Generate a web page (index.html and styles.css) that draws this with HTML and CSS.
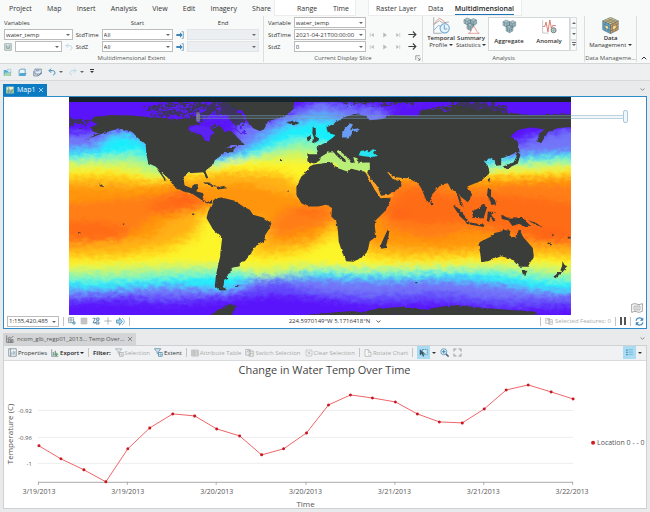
FILE: index.html
```html
<!DOCTYPE html>
<html lang="en">
<head>
<meta charset="utf-8">
<title>Multidimensional map</title>
<link rel="stylesheet" href="styles.css">
</head>
<body>
<svg class="defs" aria-hidden="true">
  <symbol id="folder" viewBox="0 0 24 24"><path d="M2 21V5h7l2 3h10v13z" fill="#55add2"/><path d="M2 21l4-9h17l-4 9z" fill="#a7d6b0"/><path d="M12 3h9v9h-7z" fill="#d9edf7" stroke="#6fa9c6"/></symbol>
  <symbol id="open" viewBox="0 0 24 24"><path d="M3 20V6l5-3h11v17z" fill="#eaf5fa" stroke="#468db6" stroke-width="2"/><path d="M2 21l4-8h17l-4 8z" fill="#54a7d0"/></symbol>
  <symbol id="save" viewBox="0 0 24 24"><path d="M5 3h17v13H5zM2 8v13h12" fill="#e7eef8" stroke="#64758e" stroke-width="2"/><path d="M8 4h9v5H8z" fill="#8ca9c9"/><path d="M12 17l3 4 7-9" fill="none" stroke="#3d67a0" stroke-width="2"/></symbol>
  <symbol id="undo" viewBox="0 0 24 24"><path d="M9 2L3 8l6 6M4 8h10c9 0 9 12 1 13" fill="none" stroke="currentColor" stroke-width="3"/></symbol>
  <symbol id="redo" viewBox="0 0 24 24"><path d="M15 2l6 6-6 6M20 8H10C1 8 1 20 9 21" fill="none" stroke="currentColor" stroke-width="3"/></symbol>
  <symbol id="into" viewBox="0 0 24 24"><path d="M1 9h11V4l8 8-8 8v-5H1z" fill="#3e83b7"/><path d="M17 2h5v20h-5" fill="none" stroke="#4c7da2" stroke-width="2"/></symbol>
  <symbol id="first" viewBox="0 0 24 24"><path d="M5 4v16" stroke="#aaa" stroke-width="2"/><path d="M19 4v16L8 12z" fill="#bbb"/></symbol>
  <symbol id="play" viewBox="0 0 24 24"><path d="M5 2v20l15-10z" fill="#b6bbb8"/></symbol>
  <symbol id="last" viewBox="0 0 24 24"><path d="M19 4v16" stroke="#aaa" stroke-width="2"/><path d="M5 4v16l11-8z" fill="#bbb"/></symbol>
  <symbol id="arrow" viewBox="0 0 24 24"><path d="M1 12h20M13 4l8 8-8 8" fill="none" stroke="#404040" stroke-width="3"/></symbol>
  <symbol id="chev" viewBox="0 0 24 24"><path d="M3 7l9 9 9-9" fill="none" stroke="currentColor" stroke-width="4"/></symbol>
  <symbol id="profile" viewBox="0 0 48 48"><path d="M2 1v45h22M2 22l16-12 9 7 18-3" fill="none" stroke="#8a9298" stroke-width="2"/><path d="M3 19L18 3l10 7 16 15" fill="none" stroke="#d9705f" stroke-width="2"/><path d="M3 37l12-13 8 3" fill="none" stroke="#5a9bc0" stroke-width="2"/><circle cx="33" cy="32" r="13" fill="#e4f3fc" stroke="#6ba7d2" stroke-width="3"/><path d="M32 23v11h8" fill="none" stroke="#4080af" stroke-width="2"/></symbol>
  <symbol id="cubes" viewBox="0 0 48 48"><g stroke="#56717d" stroke-width="1.5" fill="#a8c4cb"><path d="M3 9l10-6 11 5v11l-10 6-11-5zM24 10l10-5 10 5v12l-10 5-10-5zM13 24l11-5 11 5v14l-11 6-11-6z"/><path d="M3 9l11 5 10-6M14 14v11M24 10l10 5 10-5M34 15v12M13 24l11 6 11-6M24 30v14M8 11v12M19 11v11M29 12v13M39 12v12M18 27v14M30 27v13M13 31l11 6 11-6" fill="none"/></g></symbol>
  <symbol id="summary" viewBox="0 0 48 48"><use href="#cubes" width="42" height="42"/><path d="M15 46c10 0 8-18 15-18s7 18 16 18z" fill="#fff" stroke="#d48478" stroke-width="2"/></symbol>
  <symbol id="anomaly" viewBox="0 0 48 48"><path d="M2 4v41h20" fill="none" stroke="#a6aaad" stroke-width="2"/><path d="M3 24h6l4-14 6 31 6-38 5 27 4-9h10" fill="none" stroke="#cf5e52" stroke-width="2.5"/><circle cx="37" cy="36" r="8" fill="#c6d4ce" stroke="#677c78" stroke-width="3"/><path d="M31 36h12M37 29v14" stroke="#677c78"/></symbol>
  <symbol id="data" viewBox="0 0 48 48"><g stroke="#476675" stroke-width="1.5"><path d="M2 11l22-10 22 10-22 11z" fill="#e3c47d"/><path d="M2 11l22 11v25L2 36z" fill="#6aabc9"/><path d="M46 11L24 22v25l22-11z" fill="#d69b55"/><path d="M9 8l22 10v25M17 5l22 10v25M39 8L17 18v25M31 5L9 15v25M2 19l22 11 22-11M2 28l22 11 22-11" fill="none"/></g><path d="M10 24l7 3v7l-7-3zM31 27l8-4v8l-8 4z" fill="#f6da8c"/></symbol>
  <symbol id="launch" viewBox="0 0 24 24"><path d="M3 20V3h17M10 10l10 10M20 11v10H10" fill="none" stroke="#666" stroke-width="2.5"/></symbol>
  <symbol id="mapicon" viewBox="0 0 24 24"><path d="M1 2h22v20H1z" fill="#e6edca"/><path d="M1 13l8-4 5 4 9-5v14H1z" fill="#93bb98"/><path d="M5 2l4 8-2 12M14 22l2-9 7-4" fill="none" stroke="#648caa" stroke-width="2"/></symbol>
  <symbol id="close" viewBox="0 0 24 24"><path d="M4 4l16 16M20 4L4 20" stroke="currentColor" stroke-width="2.5"/></symbol>
  <symbol id="grid" viewBox="0 0 24 24"><path d="M2 2h15v15H2zM9 2v15M2 9h15" fill="none" stroke="#6c8090" stroke-width="2"/><path d="M18 12v12M12 18h12" stroke="#3d8bbd" stroke-width="2.5"/></symbol>
  <symbol id="cubeset" viewBox="0 0 24 24"><path d="M2 2h20v20H2z" fill="#d8e3df" stroke="#8b9c98" stroke-width="2"/><path d="M7 6v10h10V6M12 9v7" fill="none" stroke="#6f9096" stroke-width="2"/></symbol>
  <symbol id="tiles" viewBox="0 0 24 24"><path d="M3 3h18v18H3z" fill="#d6d6d6"/><path d="M3 3h18v18H3zM9 3v18M15 3v18M3 9h18M3 15h18" fill="none" stroke="#aaa" stroke-width="1.5"/></symbol>
  <symbol id="snap" viewBox="0 0 24 24"><path d="M2 4h8L3 17h9M14 3h7v7h-7zM12 15h9v6h-9z" fill="none" stroke="#507a99" stroke-width="2.5"/><path d="M5 21L20 7" stroke="#55a4d0" stroke-width="2"/></symbol>
  <symbol id="cross" viewBox="0 0 24 24"><path d="M12 1v22M1 12h22" stroke="#8b969b" stroke-width="2"/></symbol>
  <symbol id="north" viewBox="0 0 24 24"><path d="M1 8h8V2l8 10-8 10v-6H1z" fill="#a5d0e8" stroke="#4b8bb2" stroke-width="2"/><path d="M16 3c8 4 8 14 0 18" fill="none" stroke="#5c99c0" stroke-width="2"/></symbol>
  <symbol id="chart" viewBox="0 0 24 24"><path d="M2 1v21h20M5 13l5-7 5 4 7-7M8 22v-9h5v9M16 22v-8h5v8" fill="none" stroke="currentColor" stroke-width="2"/></symbol>
  <symbol id="props" viewBox="0 0 24 24"><path d="M2 2h20v20H2zM7 2v20" fill="#f7fafb" stroke="#72818c" stroke-width="2"/><path d="M10 18v-6M14 18V7M18 18v-9" stroke="#6d91a9" stroke-width="2"/></symbol>
  <symbol id="export" viewBox="0 0 24 24"><path d="M2 1v21h20" fill="none" stroke="#6b7a80" stroke-width="2"/><path d="M5 20V9h4v11zM11 20V5h4v15z" fill="#8b9ca2"/><path d="M14 10l6 6-6 6M10 16h10" fill="none" stroke="#4a9e60" stroke-width="3"/></symbol>
  <symbol id="filter" viewBox="0 0 24 24"><path d="M1 2h17l-6 8v7l-4-3v-4z" fill="#dbe9ef" stroke="currentColor" stroke-width="2"/><path d="M12 12h10v10H12z" fill="#e9f6fc" stroke="currentColor" stroke-width="2"/><path d="M12 17h10M17 12v10" stroke="currentColor"/></symbol>
  <symbol id="table" viewBox="0 0 24 24"><path d="M2 3h20v18H2z" fill="#ddd"/><path d="M2 3h20v18H2zM2 9h20M2 15h20M9 3v18" fill="none" stroke="#b1b1b1" stroke-width="2"/></symbol>
  <symbol id="switch" viewBox="0 0 24 24"><path d="M2 4h12v15H2zM11 8h11v14H11zM5 12l4-6 5 5M14 18l4-5 3 4" fill="none" stroke="#aaa" stroke-width="2"/></symbol>
  <symbol id="clear" viewBox="0 0 24 24"><path d="M3 3h18v18H3z" fill="none" stroke="#aaa" stroke-width="2" stroke-dasharray="5 2"/><path d="M8 7l8 9M16 7l-8 9" stroke="#aaa" stroke-width="2"/></symbol>
  <symbol id="rotate" viewBox="0 0 24 24"><path d="M3 2v20h18V11L13 2zM13 2v9h8" fill="#fafafa" stroke="#aaa" stroke-width="2"/><path d="M11 15l6 5" stroke="#a0bdcb" stroke-width="2"/></symbol>
  <symbol id="select" viewBox="0 0 24 24"><path d="M9 4h13v13H9z" fill="#c9e9f6" stroke="#397b9f" stroke-width="2" stroke-dasharray="4 2"/><path d="M2 3v17l5-4 4 7 3-2-3-6h6z" fill="#3b596c"/></symbol>
  <symbol id="magnify" viewBox="0 0 24 24"><path d="M15 15l8 8" stroke="#48667f" stroke-width="4"/><circle cx="10" cy="10" r="8" fill="#e7f5fc" stroke="#5489ad" stroke-width="2"/><path d="M5 10h10M10 5v10" stroke="#337eb0" stroke-width="2.5"/></symbol>
  <symbol id="extent" viewBox="0 0 24 24"><path d="M2 9V2h7zM15 2h7v7zM2 15v7h7zM22 15v7h-7z" fill="#b5b5b5" stroke="#b5b5b5" stroke-width="2"/></symbol>
  <symbol id="legend" viewBox="0 0 24 24"><path d="M3 4h4v3H3zM3 10h4v3H3zM3 16h4v3H3z" fill="#3b88b5"/><path d="M9 5h12M9 11h12M9 17h12" stroke="#68aed1" stroke-width="2"/></symbol>
  <symbol id="refresh" viewBox="0 0 24 24"><path d="M3 10C4 1 16 0 20 7M21 14c-1 9-13 10-17 3" fill="none" stroke="#3d88c4" stroke-width="3"/><path d="M22 1v9h-9zM2 23v-9h9z" fill="#3d88c4"/></symbol>
  <symbol id="book" viewBox="0 0 36 30"><path d="M2 4l10-2 12 3 10-3v23l-10 3-12-3-10 3z" fill="#fff" stroke="#777" stroke-width="2"/><path d="M9 9h18v12H9zM15 11v8M21 11v8" fill="none" stroke="#888" stroke-width="2"/></symbol>
</svg>

<header class="ribbon">
  <nav class="tabs">
    <div class="tabset plain"><a href="#">Project</a><a href="#">Map</a><a href="#">Insert</a><a href="#">Analysis</a><a href="#">View</a><a href="#">Edit</a><a href="#">Imagery</a><a href="#">Share</a></div>
    <div class="tabset context range"><a href="#">Range</a><a href="#">Time</a></div>
    <div class="tabset context layer"><a href="#">Raster Layer</a><a href="#">Data</a><a href="#" class="active">Multidimensional</a></div>
  </nav>
  <div class="groups">
    <section class="group">
      <div class="extent">
        <label for="vars">Variables</label><span></span><span class="mid">Start</span><span></span><span class="mid">End</span>
        <span class="combo"><select id="vars"><option>water_temp</option></select></span>
        <label for="t0">StdTime</label><span class="combo"><select id="t0"><option>All</option></select></span>
        <svg class="ic8"><use href="#into"/></svg><span class="combo off"><select disabled aria-label="End time"><option></option></select></span>
        <span class="picker"><svg class="ic8"><use href="#cubeset"/></svg><span class="combo"><select aria-label="Variable set"><option></option></select></span><button class="pale" aria-label="Reset"><svg class="ic8"><use href="#undo"/></svg></button></span>
        <label for="z0">StdZ</label><span class="combo"><select id="z0"><option>All</option></select></span>
        <svg class="ic8"><use href="#into"/></svg><span class="combo off"><select disabled aria-label="End depth"><option></option></select></span>
      </div>
      <h2>Multidimensional Extent</h2>
    </section>
    <section class="group">
      <div class="slice">
        <label for="v1">Variable</label><span class="combo"><select id="v1"><option>water_temp</option></select></span><span></span>
        <label for="t1">StdTime</label><span class="combo"><select id="t1"><option>2021-04-21T00:00:00</option></select></span>
        <span class="steps"><button aria-label="First"><svg class="ic6"><use href="#first"/></svg></button><button aria-label="Play"><svg class="ic6"><use href="#play"/></svg></button><button aria-label="Last"><svg class="ic6"><use href="#last"/></svg></button><button aria-label="Next"><svg class="ic9"><use href="#arrow"/></svg></button></span>
        <label for="z1">StdZ</label><span class="combo"><select id="z1"><option>0</option></select></span>
        <span class="steps"><button aria-label="First"><svg class="ic6"><use href="#first"/></svg></button><button aria-label="Play"><svg class="ic6"><use href="#play"/></svg></button><button aria-label="Last"><svg class="ic6"><use href="#last"/></svg></button><button aria-label="Next"><svg class="ic9"><use href="#arrow"/></svg></button></span>
      </div>
      <h2>Current Display Slice<svg class="ic6 launcher"><use href="#launch"/></svg></h2>
    </section>
    <section class="group">
      <div class="tools">
        <button class="tool"><svg><use href="#profile"/></svg>Temporal<br><span>Profile <i class="tri"></i></span></button>
        <button class="tool"><svg><use href="#summary"/></svg>Summary<br><span>Statistics <i class="tri"></i></span></button>
        <div class="gallery">
          <button class="tool"><svg><use href="#cubes"/></svg>Aggregate</button>
          <button class="tool"><svg><use href="#anomaly"/></svg>Anomaly</button>
        </div>
        <div class="scroller"><button aria-label="Up"><i class="tri up"></i></button><button aria-label="Down"><i class="tri"></i></button><button aria-label="More"><i class="tri bar"></i></button></div>
      </div>
      <h2>Analysis</h2>
    </section>
    <section class="group">
      <div class="tools center"><button class="tool"><svg><use href="#data"/></svg>Data<br><span>Management <i class="tri"></i></span></button></div>
      <h2>Data Manageme...</h2>
    </section>
    <section class="group last"><button class="collapse" aria-label="Collapse ribbon"><svg class="ic6 flip"><use href="#chev"/></svg></button></section>
  </div>
</header>

<div class="quick">
  <button aria-label="New"><svg class="ic9"><use href="#folder"/></svg></button>
  <button aria-label="Open"><svg class="ic9"><use href="#open"/></svg></button>
  <button aria-label="Save"><svg class="ic9"><use href="#save"/></svg></button>
  <button class="pair blue" aria-label="Undo"><svg class="ic8"><use href="#undo"/></svg><i class="tri dark"></i></button>
  <button class="pair pale" aria-label="Redo"><svg class="ic8"><use href="#redo"/></svg><i class="tri dark"></i></button>
  <button aria-label="Customize"><i class="tri bar"></i></button>
</div>

<main>
  <div class="strip"><a href="#" class="doc"><svg class="ic8"><use href="#mapicon"/></svg>Map1<svg class="ic6"><use href="#close"/></svg></a><svg class="ic5"><use href="#chev"/></svg></div>
  <section class="mappane">
    <div class="canvas">
      <svg class="world" viewBox="2 6 1508 654" preserveAspectRatio="none">
        <defs>
          <filter id="soft" x="-10%" y="-10%" width="120%" height="120%"><feGaussianBlur stdDeviation="18 9" result="b"/><feTurbulence type="fractalNoise" baseFrequency=".05 .08" numOctaves="4" seed="4" result="n"/><feDisplacementMap in="b" in2="n" scale="26" xChannelSelector="R" yChannelSelector="G"/></filter>
          <filter id="coast" x="-5%" y="-5%" width="110%" height="110%"><feTurbulence type="fractalNoise" baseFrequency=".08" numOctaves="3" seed="9" result="n"/><feDisplacementMap in="SourceGraphic" in2="n" scale="8" xChannelSelector="R" yChannelSelector="G"/></filter>
          <filter id="rough" x="-5%" y="-5%" width="110%" height="110%"><feTurbulence type="fractalNoise" baseFrequency=".07" numOctaves="3" seed="3" result="n"/><feDisplacementMap in="SourceGraphic" in2="n" scale="45" xChannelSelector="R" yChannelSelector="G"/></filter>
        </defs>
        <rect x="0" y="0" width="1512" height="664" fill="#5a14fb"/>
        <g filter="url(#soft)">
          <path fill="#6249fb" d="M-60 107L60 113 150 90 240 115 430 175 500 125 505 80 560 80 640 52 700 32 750 12 900 26 960 40 970 100 1340 145 1390 118 1460 102 1570 88V638L1300 640 1100 622 900 628 750 612 620 600 500 612 300 628 150 618-60 630z"/>
          <path fill="#7274f8" d="M-60 118L60 124 150 98 240 120 430 180 500 135 510 95 560 96 640 68 700 46 750 20 830 40 960 50 970 100 1340 156 1390 136 1460 118 1570 104V612L1300 612 1100 592 900 602 750 590 620 560 500 598 300 605 150 598-60 612z"/>
          <path fill="#56acfa" d="M-60 160L80 152 140 108 200 115 430 190 520 168 560 128 640 85 750 48 820 62 860 120 1250 188 1400 174 1570 164V598L1400 590 1300 574 1100 558 900 562 750 556 560 553 480 590 300 578 100 592-60 586z"/>
          <path fill="#12effb" d="M-60 176L80 168 135 122 190 125 235 155 430 196 520 178 590 140 640 103 750 78 800 85 850 135 1250 195 1400 186 1570 174V590L1430 584 1300 562 1150 547 1000 550 800 546 700 540 560 547 480 580 300 567 100 580-60 576z"/>
          <path fill="#8ff5a8" d="M-60 190L100 184 200 172 245 190 430 203 560 180 650 145 700 128 770 150 950 180 1100 250 1260 208 1340 198 1570 184V564L1400 552 1300 538 1150 533 1000 540 850 538 750 532 600 552 500 540 300 548 100 558-60 554z"/>
          <path fill="#d3f55c" d="M-60 206L120 200 200 202 250 225 430 215 540 190 640 170 700 165 770 180 900 210 1260 223 1340 212 1570 202V542L1380 524 1300 518 1100 522 850 524 750 518 590 540 480 518 300 524 100 534-60 532z"/>
          <path fill="#fcf52b" d="M-60 222L120 217 200 230 260 250 340 230 430 222 500 195 600 200 700 195 900 230 1250 232 1340 225 1570 218V522L1350 506 1200 506 1000 511 850 513 700 505 550 520 450 505 300 506-60 518z"/>
          <path fill="#ffd61a" d="M-60 236L150 234 260 258 400 234 460 226 600 222 660 232 690 262 900 235 1250 240 1570 226V502L1350 490 1200 493 1000 501 900 490 800 430 700 480 580 492 500 470 430 350 390 430 300 478 150 495-60 500z"/>
          <path fill="#ffb016" d="M-60 252L150 254 260 265 400 245 460 236 600 240 660 250 690 280 900 240 1250 250 1570 238V486L1350 472 1200 476 1000 482 900 468 800 390 730 452 590 474 560 440 430 340 380 410 300 448 150 478-60 478z"/>
          <path fill="#ff940e" d="M-60 272L200 282 300 268 430 278 530 265 640 295 710 310 1000 240 1290 256 1570 250V458L1400 450 1300 448 1150 460 1000 452 900 440 800 370 750 430 620 445 590 370 410 330 300 380 250 425-60 462z"/>
          <path fill="#ff7e12" d="M-60 330L200 310 360 285 420 325 400 345 250 365 220 390 160 440-60 445zM610 385l50-50 120-5 20 50-120 30-60 20zM920 340l60-75 100-10 120 30 120-15 250 0v185l-160-10-200-40-120 30-130-30z"/>
          <path fill="#ff6c16" d="M250 325l90-35 80 35-70 18-100 12zM-60 385l150-5 90 20-30 30-110 8zM950 355l50-65 60-10 100 30 130-10 280 30v110l-200-20-180-40-120 10-80-10z"/>
          <path fill="#ff5a1c" opacity=".6" d="M310 308l60-13 35 25-40 5zM960 360l60-18-20 35zM680 345l80-8 10 16-70 8zM1380 415l70-10 60 20-80 15z"/>
          <path fill="#fcf52b" opacity=".7" d="M395 365l30 15 35 80 0 25-110-5 40-60zM800 425l20 65-80 15-10-35z"/>
        </g>
        <g fill="#3b3c3a" filter="url(#coast)">
          <path d="M62 75L80 65 130 60 200 62 240 66 330 72 380 72 395 88 365 93 360 105 385 115 400 120 412 138 422 140 430 118 425 100 440 85 460 98 470 112 490 108 505 125 520 140 530 150 490 150 470 160 505 154 495 166 500 172 470 172 455 185 440 195 435 210 415 225 412 230 420 248 415 252 405 232 385 234 355 235 345 250 350 272 370 280 375 268 390 268 385 290 407 295 403 312 415 322 432 318 430 327 415 325 395 312 370 295 345 290 318 275 300 250 275 228 262 215 240 205 235 180 232 150 210 130 190 110 150 100 125 108 90 120 50 135 90 115 70 108 65 98 85 88z"/>
          <path d="M266 222l8 4 24 34-8-4z"/>
          <path d="M470 18L680 14 676 42 650 65 600 78 588 103 575 108 555 100 535 75 525 50 490 35z"/>
          <path d="M430 330L440 312 460 308 500 318 525 335 545 345 555 360 585 368 610 385 605 400 592 420 588 440 560 455 550 475 530 500 515 502 515 515 490 520 492 530 478 540 480 552 468 558 466 575 476 587 455 588 440 575 443 545 448 520 455 490 462 430 435 405 415 370 420 350z"/>
          <path d="M735 210L795 200 800 215 820 222 840 230 850 220 880 228 897 235 902 250 920 285 938 309 968 310 966 322 950 350 922 378 920 395 925 425 905 440 900 465 880 490 855 501 835 500 825 480 812 440 810 410 805 380 790 365 792 340 775 330 750 335 720 335 700 325 685 300 685 275 700 245 712 235 725 215z"/>
          <path d="M718 178H748L743 160 755 152 775 142 795 128 802 120 780 114 775 98 800 85 825 68 860 57 895 62 905 76 940 73 970 60 1050 64 1060 45 1150 28 1210 38 1250 42 1310 52 1390 60 1515 58V96L1470 99 1440 112 1420 145 1409 139 1415 115 1430 104 1390 97 1350 105 1328 125 1350 140 1355 168 1325 182 1300 190 1300 211 1285 213 1280 195 1265 190 1248 198 1262 215 1265 235 1240 258 1215 268 1198 275 1213 300 1200 322 1178 305 1172 295 1188 338 1176 326 1165 290 1150 285 1140 265 1120 268 1092 300 1085 323 1075 316 1060 280 1050 265 1020 250 995 249 975 246 957 230 975 252 1000 260 1000 275 965 300 938 304 920 270 898 234 905 205 850 205 800 195 770 188 750 200 738 206 718 200z"/>
          <path d="M734 95l9 8 1 18 9 14-14 10-8-3 7-12-5-15zM716 128l11-6 3 11-11 7zM655 82l20-5 20 7-18 8zM1305 215l32-12 11-22-4-14 14 12-8 27-36 17zM1260 254l7-6-3 16zM1155 332l15 7 30 35-5 8-20-18zM1193 381l57 9-3 7-50-9zM1212 350l24-12 12-10 9 12-10 31-31-2zM1260 350l22 2-12 8 13 17-6 3-10-14-3 16-7-4zM1260 282l10 2-1 18 13 15 3 12-15 1-5-16-8-8zM1300 360l20 9 42-2 29 29-18 1-19-10-20 7-12-17-20-4zM1232 450L1236 442 1270 425 1280 415 1300 410 1308 405 1328 409 1325 422 1345 430 1354 402 1366 427 1395 460 1398 485 1380 516 1355 516 1340 498 1320 490 1300 485 1260 500 1240 503 1238 480zM1362 528h17l-6 12-8-1zM1484 500l7 12 10 3-16 16-7-4 5-13zM1457 546l17-14 10-1-21 20zM940 446l19-41 6 6-12 49-13 2-3-9zM1090 317l7 11-5 5-5-8zM404 262l20 1 24 13-20-3zM446 276l20-2 12 6-31 4zM502 571l11 1-5 5-8-1z"/>
          <path d="M430 662l18-16 38-18 20 6-14 28zM700 662l110-10 50-2 20 4 50-12 70-5 70 8 60-10 40-3 80 8 60 5 90 6 10 12z"/>
          <path d="M92 265l9 5 6 8-3 2-8-9zM30 412h6v5h-6zM164 386h4v4h-4zM372 356h6v5h-6zM1380 376l24 8 22 15-24-10zM1440 442l13 7-3 3-13-7zM1452 418l7 2-4 5zM1042 562h6v4h-6zM636 194h6v4h-6zM658 287h4v4h-4zM1500 426h8v5h-8z"/>
        </g>
        <g fill="#363b3c" filter="url(#rough)"><path d="M230 46l60-24 70-4 120 0 40 36 10 32-30 8-20-24-50-8-20 18-40-6-40-8-70-6zM0 72l42 4 20 8-30 12L0 85zM820 8h230l-8 12-60 8-80-5-50 4zM1150 22l80-4 110 25-60 12-100-16z" opacity=".82"/></g>
        <g fill="none" stroke="#5a1cf2" stroke-width="7" filter="url(#rough)"><path d="M240 54l70-10 60 5 55-15M280 30l55 8 60-20 55 7M310 70l60-15 50 12 40-25M400 80l35-20 45 8M420 98l50-14 40 22 25 8M970 46l75-16 70 10 40-10"/></g>
        <path d="M360 102l28-12 20 2 20 10 12 12-14 8-3 18-12-3-9-20-30-6z" fill="#5c20f4" filter="url(#coast)"/>
        <g filter="url(#coast)">
          <path fill="#b9ef78" d="M758 186L780 173 797 172 805 182 825 200 835 206 832 194 805 170 812 165 835 185 850 205 860 202 856 186 868 190 872 204 905 203 906 225 880 229 848 221 838 230 810 220 801 202 750 207 756 196z"/>
          <path fill="#28e4f2" d="M872 181l6-13 18-3 6 8 12-10 9 2-8 7 15 11-20 3-23-2z"/>
          <path fill="#ffa022" d="M893 234l9 7 27 35 10 27 36-5 0 7-37 5-19-29zM957 230l10 5 14 14 14 0-6 9-15-6z"/>
          <path fill="#699cf6" d="M822 128l1-18 22-25 10 4-9 16 22-5 8 5-22 6-8 16z"/>
        </g>
        <rect x="2" y="6" width="1508" height="15" fill="#18242b"/>
      </svg>
      <div class="slider"><i class="thumb low"></i><i class="thumb high"></i></div>
      <button class="book" aria-label="Notes"><svg><use href="#book"/></svg></button>
    </div>
    <footer class="status">
      <span class="combo scale"><select aria-label="Scale"><option>1:155,420,485</option></select></span><i class="sep"></i>
      <svg class="ic8"><use href="#grid"/></svg><svg class="ic8"><use href="#tiles"/></svg><svg class="ic8"><use href="#snap"/></svg><svg class="ic8"><use href="#cross"/></svg><svg class="ic9"><use href="#north"/></svg><i class="sep"></i>
      <span class="coords">224.5970149°W 5.1716418°N <svg class="ic5"><use href="#chev"/></svg></span>
      <i class="sep"></i><span class="features"><svg class="ic8"><use href="#switch"/></svg>Selected Features: 0</span><i class="sep"></i><button class="pause" aria-label="Pause"></button><i class="sep"></i><button aria-label="Refresh"><svg class="ic9"><use href="#refresh"/></svg></button>
    </footer>
  </section>

  <div class="strip lower"><a href="#" class="doc"><svg class="ic8"><use href="#chart"/></svg>ncom_glb_regp01_2013... Temp Over...<svg class="ic6"><use href="#close"/></svg></a><svg class="ic5"><use href="#chev"/></svg></div>
  <section class="chartpane">
    <div class="toolbar">
      <button><svg class="ic9"><use href="#props"/></svg>Properties</button>
      <button class="strong"><svg class="ic8"><use href="#export"/></svg>Export <i class="tri"></i></button><i class="sep"></i>
      <b>Filter:</b>
      <button disabled><svg class="ic9"><use href="#filter"/></svg>Selection</button>
      <button class="teal"><svg class="ic9"><use href="#filter"/></svg><span>Extent</span></button><i class="sep"></i>
      <button disabled><svg class="ic8"><use href="#table"/></svg>Attribute Table</button>
      <button disabled><svg class="ic9"><use href="#switch"/></svg>Switch Selection</button>
      <button disabled><svg class="ic8"><use href="#clear"/></svg>Clear Selection</button><i class="sep"></i>
      <button disabled><svg class="ic8"><use href="#rotate"/></svg>Rotate Chart</button><i class="sep"></i>
      <button class="drop" aria-label="Select"><span class="lit"><svg class="ic9"><use href="#select"/></svg></span><i class="tri"></i></button>
      <button aria-label="Zoom"><svg class="ic9"><use href="#magnify"/></svg></button>
      <button aria-label="Full extent"><svg class="ic9"><use href="#extent"/></svg></button>
      <button class="drop far" aria-label="Legend"><span class="lit"><svg class="ic9"><use href="#legend"/></svg></span><i class="tri"></i></button>
    </div>
    <svg class="plot" viewBox="4 361 643 148" role="img" aria-label="Change in Water Temp Over Time">
      <path class="gridline" d="M38 410.500H574M38 437.500H574M38 463.500H574"/>
      <path class="axis" d="M38 482.500H574M38.500 482v3M127.500 482v3M216.500 482v3M306.500 482v3M395.500 482v3M484.500 482v3M573.500 482v3"/>
      <path class="series" id="series" d=""/>
      <g id="dots" class="dots"></g>
      <text class="title" x="325" y="374">Change in Water Temp Over Time</text>
      <g class="ylab"><text x="32" y="413">-0.92</text><text x="32" y="440">-0.96</text><text x="32" y="466">-1</text></g>
      <g class="xlab"><text x="39" y="494">3/19/2013</text><text x="128" y="494">3/19/2013</text><text x="217" y="494">3/20/2013</text><text x="306" y="494">3/20/2013</text><text x="395" y="494">3/21/2013</text><text x="484" y="494">3/21/2013</text><text x="573" y="494">3/22/2013</text></g>
      <text class="name" x="306" y="507">Time</text>
      <text class="name" transform="translate(13 434) rotate(-90)">Temperature (C)</text>
      <circle cx="594" cy="443" r="2" fill="#d21a20"/><text class="key" x="598" y="445">Location 0 - - 0</text>
    </svg>
  </section>
</main>
<script src="chart.js"></script>
</body>
</html>
```
FILE: styles.css
```css
* { box-sizing: border-box; }
body { margin: 0; min-height: 100vh; display: flex; flex-direction: column; background: #e9eaeb; color: #333; font: 6px/8px "Open Sans", "Noto Sans", sans-serif; }
.defs { position: absolute; width: 0; height: 0; }
a { color: inherit; text-decoration: none; }
button { display: inline-flex; align-items: center; justify-content: center; flex: none; padding: 0; border: 0; background: none; color: inherit; font: inherit; white-space: nowrap; }
button:disabled { color: #aaa; }
svg { flex: none; display: block; }
label, span { white-space: nowrap; }
.ic5 { width: 5px; height: 5px; }
.ic6 { width: 6px; height: 6px; }
.ic8 { width: 8px; height: 8px; }
.ic9 { width: 9px; height: 9px; }
.flip { transform: rotate(180deg); }
.tri { display: inline-block; width: 0; border: 2px solid transparent; border-top-color: currentColor; border-bottom: 0; vertical-align: middle; }
.tri.up { transform: rotate(180deg); }
.tri.dark { color: #666; }
.tri.bar { position: relative; }
.tri.bar::before { content: ""; position: absolute; left: -2px; top: -4px; width: 4px; height: 1px; background: currentColor; }
.sep { width: 1px; height: 9px; background: #c4c4c4; flex: none; }

.ribbon { background: #f8faf9; border-bottom: 1px solid #d5d6d8; }
.tabs { display: flex; height: 16px; font-size: 7px; line-height: 10px; }
.tabset { display: flex; align-items: center; }
.plain { width: 42%; padding: 2px 2px 0 9px; justify-content: space-between; }
.context { background: #fff; border: 1px solid #ececec; border-top: 0; }
.range { width: 82px; margin: 0 12px 0 1px; padding: 2px 6px 0 22px; justify-content: space-between; }
.layer { width: 154px; padding: 2px 7px 0 7px; justify-content: space-between; }
.tabs .active { font-weight: 600; color: #222; box-shadow: 0 1px #1b75b8; }
.groups { display: grid; grid-template-columns: 264fr 159fr 162fr 52fr 13fr; height: 47px; }
.group { display: flex; flex-direction: column; justify-content: space-between; min-width: 0; margin-bottom: 1px; border-right: 1px solid #dcdddd; }
.group.last { border: 0; justify-content: flex-end; }
.group h2 { position: relative; margin: 0; font: inherit; text-align: center; color: #555; white-space: nowrap; }
.launcher { position: absolute; right: 1px; top: 1px; }
.collapse { height: 8px; }
.extent, .slice { display: grid; grid-auto-rows: 11px; align-items: center; row-gap: 1px; column-gap: 3px; padding: 1px 4px 0; }
.extent { grid-template-columns: 70fr 22fr 73fr 8fr 73fr; }
.slice { grid-template-columns: 22fr 73fr 49fr; }
.mid { text-align: center; }
.picker, .steps { display: flex; align-items: center; justify-content: space-between; }
.picker .combo { width: 47px; }
.pale { color: #b9d7e8; }
.combo { position: relative; display: block; height: 11px; border: 1px solid #bcbcbc; background: #fff; }
.combo select { display: block; width: 100%; height: 100%; padding: 0 8px 0 1px; border: 0; background: none; appearance: none; font: inherit; color: #333; }
.combo::after { content: ""; position: absolute; right: 2px; top: 4px; border: 2px solid transparent; border-top-color: #666; border-bottom: 0; }
.off { background: #eceff1; border-color: #e2e4e6; }
.steps { padding-right: 1px; }
.tools { display: flex; padding: 1px 7px 0 3px; }
.center { justify-content: center; padding: 1px 0 0; }
.tool { flex-direction: column; justify-content: flex-start; line-height: 7px; width: 30px; font-weight: 600; font-size: 6px; }
.tool svg { width: 17px; height: 17px; margin-bottom: 1px; }
.tool br { display: none; }
.tool span { font-weight: 400; }
.gallery { display: flex; justify-content: space-around; flex: 1; height: 34px; padding-top: 1px; border: 1px solid #d5d8da; background: #fff; margin-left: 2px; }
.gallery .tool svg { width: 15px; height: 15px; margin-bottom: 4px; }
.scroller { display: flex; flex-direction: column; width: 7px; color: #666; }
.scroller button { flex: 1; border: 1px solid #dcdfe1; }

.quick { display: flex; align-items: center; gap: 6px; height: 17px; padding: 0 3px; background: #edeff1; border-bottom: 1px solid #d9dadc; }
.quick .pair { gap: 3px; }
.quick .blue { color: #3d86b5; }

main { flex: 1; display: flex; flex-direction: column; padding: 0 3px 3px; }
.strip { display: flex; align-items: flex-end; justify-content: space-between; height: 15px; padding-right: 2px; color: #777; }
.strip > svg { margin-bottom: 4px; }
.strip .doc { display: flex; align-items: center; gap: 3px; height: 12px; padding: 0 3px; background: #0b7bc3; color: #fff; font-size: 7px; }
.lower .doc { background: #d3d4d5; color: #555; font-size: 6px; }
.mappane { border: 1px solid #2d8bc9; background: #fff; }
.canvas { position: relative; padding: 0 11.700% 0 10.100%; }
.world { width: 100%; aspect-ratio: 503 / 218; height: auto; }
.slider { position: absolute; left: 30%; right: 3%; top: 18px; height: 4px; border: 1px solid #6d9dba66; background: #8bb9d422; }
.thumb { position: absolute; top: -4px; width: 4px; height: 10px; border-radius: 2px; background: #92949b99; }
.low { left: -2px; }
.high { right: -2px; top: -6px; width: 5px; height: 13px; border: 1px solid #abc9dc; background: #edf7fc; }
.book { position: absolute; right: 3px; bottom: 2px; }
.book svg { width: 12px; height: 10px; }
.status { display: flex; align-items: center; gap: 4px; height: 13px; padding: 0 2px 0 3px; }
.scale { width: 52px; }
.coords { flex: 1; display: flex; align-items: center; justify-content: center; gap: 6px; }
.features { display: flex; gap: 2px; color: #aaa; }
.pause { width: 6px; height: 8px; border: solid #555; border-width: 0 2px; }

.lower { height: 16px; }
.chartpane { flex: 1; background: #fff; border: 1px solid #cfd0d1; }
.toolbar { display: flex; align-items: center; gap: 4px; height: 15px; padding: 0 4px; background: #eff1f2; border-bottom: 1px solid #d9dadb; }
.toolbar button { gap: 1px; }
.toolbar .strong { color: #222; font-weight: 600; }
.toolbar .drop { gap: 2px; }
.teal { color: #4b859f; }
.teal span { color: #333; }
.toolbar .far { margin-left: auto; }
.lit { padding: 2px; background: #a9dcf3; }
.plot { width: 100%; height: auto; font-family: "Open Sans", "Noto Sans", sans-serif; fill: #555; }
.gridline { stroke: #ededed; }
.axis { stroke: #aaa; fill: none; }
.series { fill: none; stroke: #ef6468; }
.dots { fill: #c91822; }
.title { font-size: 11px; text-anchor: middle; fill: #444; }
.ylab { font-size: 6px; text-anchor: end; }
.xlab { font-size: 7px; text-anchor: middle; }
.name { font-size: 8px; text-anchor: middle; }
.key { font-size: 7px; }
```
FILE: chart.js
```js
const heights = [446, 459, 470, 482, 449, 428, 414, 416, 429, 436, 455, 449, 433, 405, 395, 398, 402, 414, 422, 423, 409, 390, 385, 392, 399];
const points = heights.map((y, i) => [Math.round(39 + i * 535 / 24), y]);
document.getElementById("series").setAttribute("d", "M" + points.map(p => p.join(" ")).join("L"));
document.getElementById("dots").innerHTML = points.map(([x, y]) => `<circle cx="${x}" cy="${y}" r="1.500"/>`).join("");
```
